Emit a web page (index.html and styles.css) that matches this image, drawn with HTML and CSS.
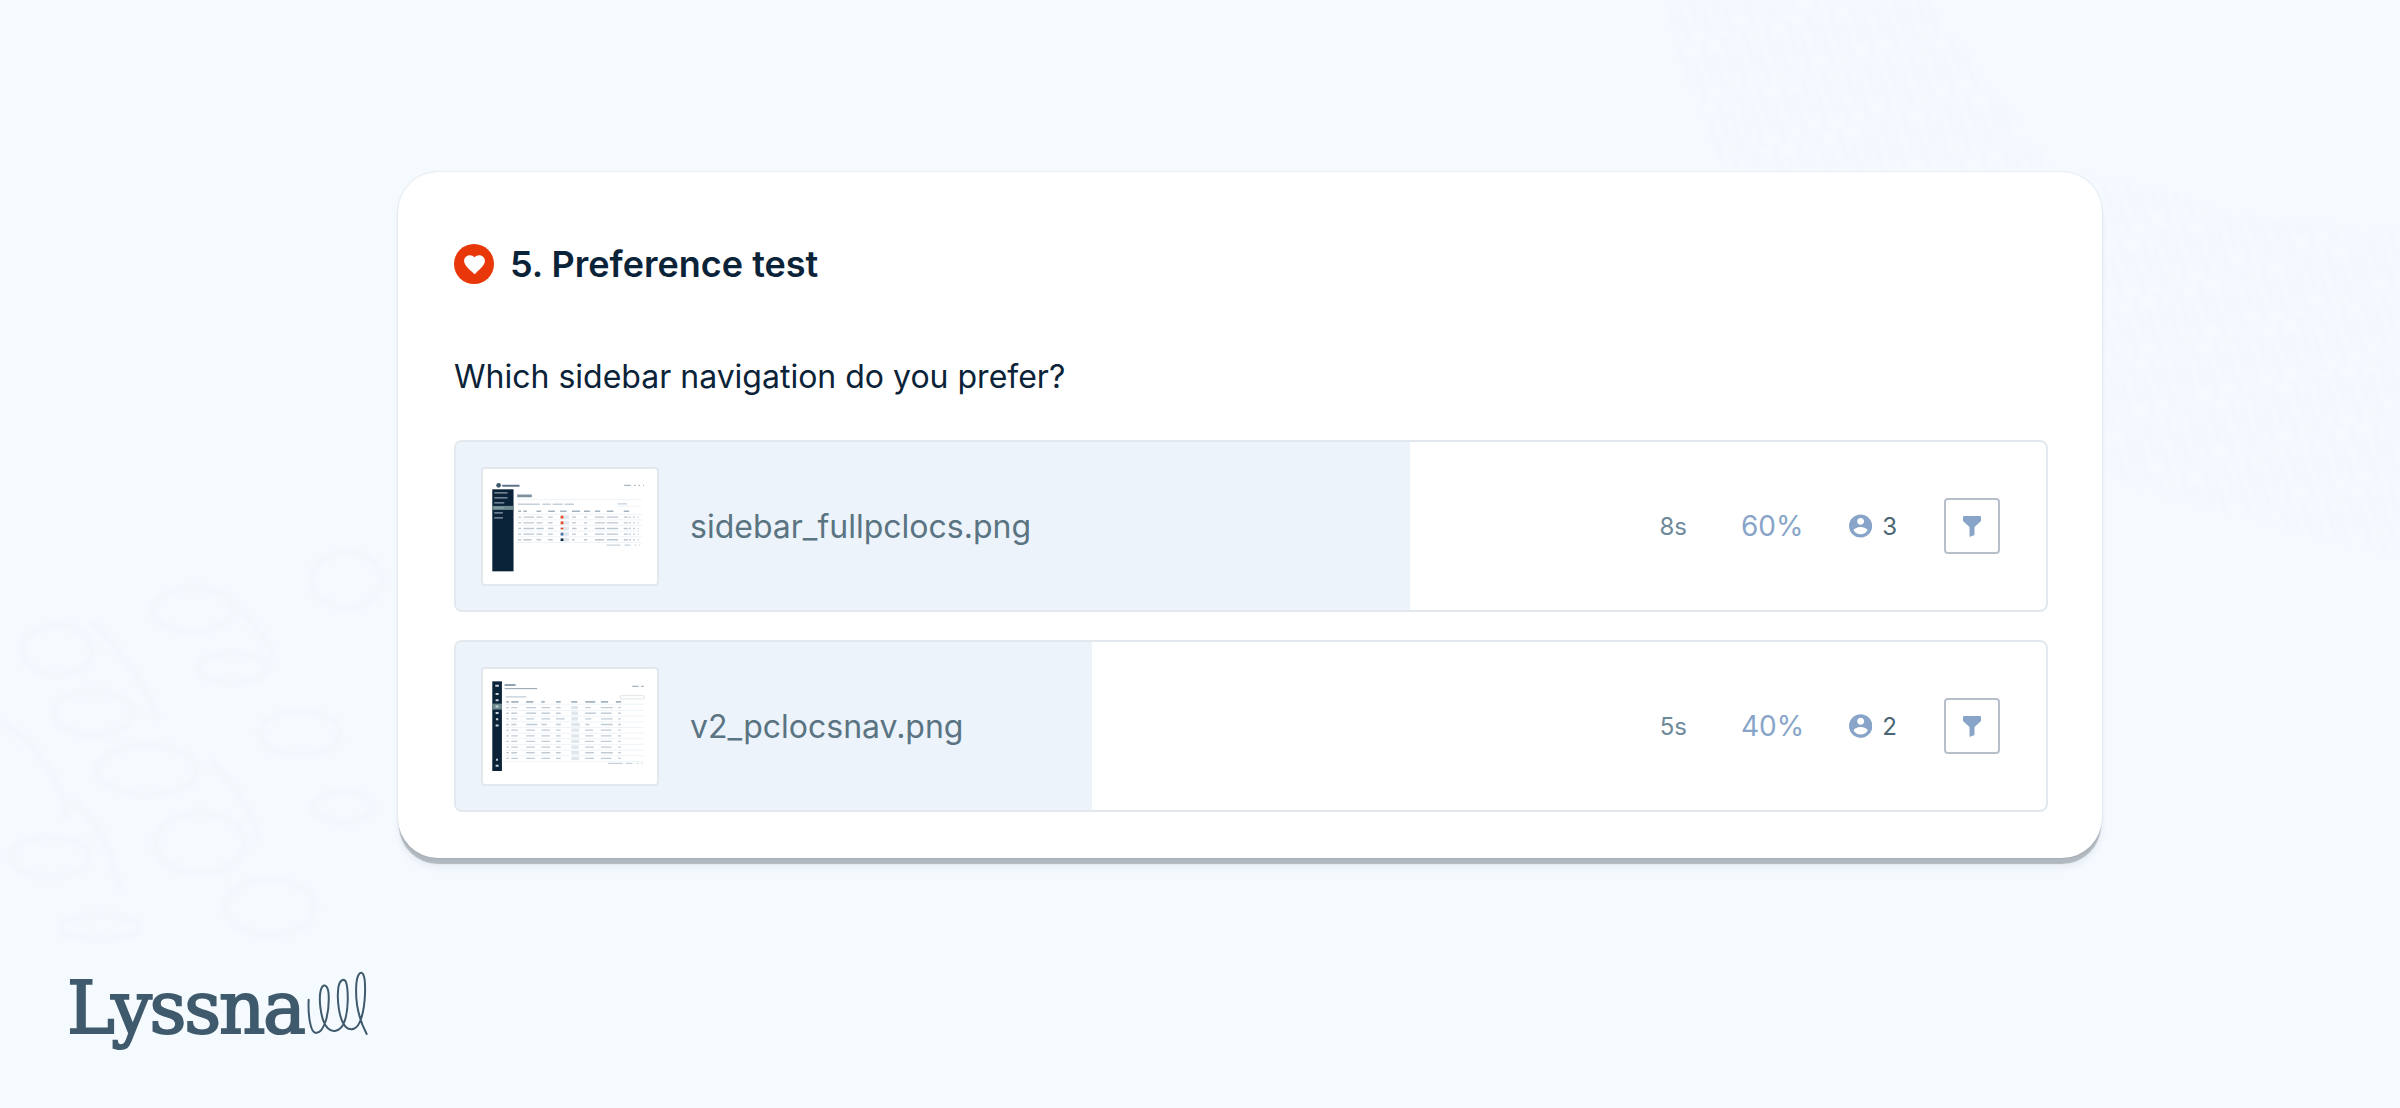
FILE: index.html
```html
<html lang="en">

<head>
    <title>Preference test</title>
    <link rel="stylesheet" href="styles.css">
</head>

<body>
    <svg class="bg-art" viewBox="0 0 2400 1108" width="2400" height="1108">
        <defs>
            <pattern id="hatch" width="22" height="60" patternUnits="userSpaceOnUse" patternTransform="rotate(-15)">
                <path d="M5 0v44M15 14v46" stroke="#f3f8fe" stroke-width="6" fill="none"/>
            </pattern>
            <filter id="soft"><feGaussianBlur stdDeviation="2"/></filter>
        </defs>
        <g filter="url(#soft)">
            <path fill="url(#hatch)" d="M1660 0H1930L2055 170H1720z"/>
            <path fill="url(#hatch)" d="M2090 170L2270 220L2400 230V560L2110 480z"/>
        </g>
        <g fill="none" stroke="#f3f8fd" stroke-width="7" filter="url(#soft)">
            <ellipse cx="57" cy="650" rx="35" ry="25"/>
            <ellipse cx="193" cy="610" rx="40" ry="22"/>
            <ellipse cx="233" cy="668" rx="35" ry="15"/>
            <ellipse cx="93" cy="713" rx="40" ry="22"/>
            <ellipse cx="147" cy="770" rx="50" ry="25"/>
            <ellipse cx="300" cy="733" rx="40" ry="22"/>
            <ellipse cx="347" cy="580" rx="35" ry="28"/>
            <ellipse cx="200" cy="843" rx="45" ry="30"/>
            <ellipse cx="50" cy="857" rx="40" ry="20"/>
            <ellipse cx="270" cy="907" rx="45" ry="28"/>
            <ellipse cx="100" cy="927" rx="40" ry="12"/>
            <ellipse cx="343" cy="807" rx="30" ry="15"/>
            <path d="M220 590C250 620 270 640 275 660M90 620C120 650 150 690 158 720M210 760C240 790 255 820 260 840M0 720C30 740 60 770 68 820M70 800C100 820 115 860 120 890"/>
        </g>
    </svg>

    <div class="card">
        <div class="card-title">
            <span class="title-icon">
                <svg viewBox="0 0 24 24" width="25" height="25"><path fill="#fff" d="M12 21.35l-1.45-1.32C5.4 15.36 2 12.28 2 8.500 2 5.420 4.420 3 7.500 3c1.740 0 3.410.81 4.500 2.090C13.090 3.810 14.760 3 16.500 3 19.580 3 22 5.420 22 8.500c0 3.780-3.400 6.860-8.550 11.540L12 21.350z"/></svg>
            </span>
            <h2>5. Preference test</h2>
        </div>
        <p class="question">Which sidebar navigation do you prefer?</p>

        <div class="answer">
            <div class="answer-fill" style="width: 60%;"></div>
            <div class="thumb">
                <svg viewBox="122 78 536 358" width="178" height="119">
                    <circle cx="175" cy="133" r="7" fill="#3f5a6c"/>
                    <path d="M186 134h52" stroke="#5d7486" stroke-width="6" fill="none"/>
                    <path d="M553 133h20M583 133h5M596 133h5M610 133h3" stroke="#a9b6c2" stroke-width="4" fill="none"/>
                    <rect x="156" y="145" width="64" height="247" fill="#0b2338"/>
                    <rect x="156" y="195" width="64" height="12" fill="#6f8a8f"/>
                    <path d="M162 156h40M162 171h40M162 186h30M162 201h30M162 216h26M162 231h26" stroke="#8ea0ad" stroke-width="4" fill="none"/>
                    <path d="M231 165h44" stroke="#7d91a1" stroke-width="8" fill="none"/>
                    <path d="M231 176h375M534 196h72M231 220h375M231 237h375M231 254h375M231 271h375M231 288h375M231 305h375" stroke="#e6eef6" stroke-width="2" fill="none"/>
                    <path d="M233 190h66M307 190h25M338 190h30M374 190h28M534 189h28" stroke="#c4d0da" stroke-width="4" fill="none"/>
                    <path d="M234 211h9M250 211h10M289 211h14M324 211h20M360 211h20M396 211h24M432 211h18M465 211h16M501 211h20M552 211h16" stroke="#a3b3c0" stroke-width="4" fill="none"/>
                    <path d="M234 229h9M250 229h32M289 229h18M324 229h14M396 229h12M432 229h10M465 229h28M501 229h34M552 229h12M567 229h6M580 229h5M594 229h3" stroke="#bcc8d2" stroke-width="4" fill="none"/>
                    <path d="M234 246h9M250 246h32M289 246h18M324 246h14M396 246h12M432 246h10M465 246h30M501 246h34M552 246h12M567 246h6M580 246h5M594 246h3" stroke="#bcc8d2" stroke-width="4" fill="none"/>
                    <path d="M234 263h9M250 263h32M289 263h22M324 263h16M396 263h14M432 263h10M465 263h30M501 263h34M552 263h12M567 263h6M580 263h5M594 263h3" stroke="#bcc8d2" stroke-width="4" fill="none"/>
                    <path d="M234 280h9M250 280h32M289 280h18M324 280h14M396 280h12M432 280h10M465 280h28M501 280h34M552 280h12M567 280h6M580 280h5M594 280h3" stroke="#bcc8d2" stroke-width="4" fill="none"/>
                    <path d="M234 297h9M250 297h24M289 297h14M324 297h14M396 297h8M432 297h10M465 297h28M501 297h34M552 297h12M567 297h6M580 297h5M594 297h3" stroke="#bcc8d2" stroke-width="4" fill="none"/>
                    <path d="M361 229h26M361 246h26M361 263h26M361 280h26M361 297h26" stroke="#dfe6ec" stroke-width="10" fill="none"/>
                    <path d="M362 229h8M362 246h8" stroke="#e8481c" stroke-width="8" fill="none"/>
                    <path d="M362 263h8" stroke="#e8481c" stroke-width="4" fill="none"/>
                    <path d="M362 280h8" stroke="#4a72a8" stroke-width="8" fill="none"/>
                    <path d="M362 297h8" stroke="#0b2338" stroke-width="8" fill="none"/>
                    <path d="M500 313h42M554 313h18M585 313h4M597 313h3" stroke="#bcc8d2" stroke-width="3" fill="none"/>
                </svg>
            </div>
            <span class="file-name">sidebar_fullpclocs.png</span>
            <span class="time">8s</span>
            <span class="percent">60%</span>
            <span class="count">
                <svg viewBox="2 2 20 20" width="24" height="24"><path fill="#88a5c9" d="M12 2C6.480 2 2 6.480 2 12s4.480 10 10 10 10-4.480 10-10S17.520 2 12 2zm0 3c1.660 0 3 1.340 3 3s-1.340 3-3 3-3-1.340-3-3 1.340-3 3-3zm0 14.200c-2.500 0-4.710-1.280-6-3.220.03-1.990 4-3.080 6-3.080 1.990 0 5.970 1.090 6 3.080-1.290 1.940-3.500 3.220-6 3.220z"/></svg>
                3
            </span>
            <button class="filter-btn">
                <svg viewBox="0 0 18 21" width="18" height="21"><path fill="#88a5c9" d="M1 0H17a1 1 0 0 1 1 1V5L11.500 11V19L6.500 21V11L0 5V1a1 1 0 0 1 1-1z"/></svg>
            </button>
        </div>

        <div class="answer">
            <div class="answer-fill" style="width: 40%;"></div>
            <div class="thumb">
                <svg viewBox="122 50 536 358" width="178" height="119">
                    <rect x="156" y="93" width="29" height="270" fill="#0b2338"/>
                    <rect x="156" y="160" width="29" height="18" fill="#6f8a8f"/>
                    <path d="M165 106h11M166 131h9M166 150h9M166 169h9M166 188h9M167 207h7M166 226h9M167 329h6M166 347h9" stroke="#c8d2da" stroke-width="6" fill="none"/>
                    <path d="M193 104h33" stroke="#8fa2b1" stroke-width="6" fill="none"/>
                    <path d="M193 115h98" stroke="#8fa2b1" stroke-width="3" fill="none"/>
                    <path d="M577 108h20M604 108h8" stroke="#a9b6c2" stroke-width="4" fill="none"/>
                    <path d="M196 140h62" stroke="#c0ccd6" stroke-width="4" fill="none"/>
                    <rect x="541" y="136" width="72" height="10" rx="3" fill="#fff" stroke="#d2dae2" stroke-width="2"/>
                    <path d="M196 162h417M196 181h417M196 198h417M196 215h417M196 232h417M196 249h417M196 266h417M196 283h417M196 300h417M196 317h417M196 334h417" stroke="#e6eef6" stroke-width="2" fill="none"/>
                    <path d="M198 155h8M213 155h22M258 155h22M304 155h10M348 155h14M394 155h18M436 155h30M483 155h22M528 155h16" stroke="#a3b3c0" stroke-width="5" fill="none"/>
                    <path d="M198 172h8M213 172h18M258 172h30M304 172h26M348 172h14M436 172h16M483 172h36M535 172h8M198 189h8M213 189h18M258 189h30M304 189h26M348 189h14M436 189h32M483 189h32M535 189h8M198 206h8M213 206h18M258 206h24M304 206h26M348 206h26M436 206h18M483 206h36M535 206h8M198 223h8M213 223h16M258 223h34M304 223h16M348 223h14M436 223h12M483 223h36M535 223h8M198 240h8M213 240h20M258 240h26M304 240h26M348 240h14M436 240h24M483 240h32M535 240h8M198 257h8M213 257h20M258 257h26M304 257h26M348 257h14M436 257h24M483 257h32M535 257h8M198 274h8M213 274h18M258 274h26M304 274h26M348 274h14M436 274h26M483 274h32M535 274h8M198 291h8M213 291h20M258 291h26M304 291h26M348 291h14M436 291h26M483 291h32M535 291h8M198 308h8M213 308h18M258 308h26M304 308h26M348 308h14M436 308h26M483 308h36M535 308h8M198 325h8M213 325h20M258 325h26M304 325h26M348 325h14M436 325h26M483 325h32M535 325h8" stroke="#c0ccd6" stroke-width="4" fill="none"/>
                    <path d="M394 172h20M394 189h20M394 206h20M394 223h26M394 240h24M394 257h24M394 274h24M394 291h22M394 308h24M394 325h24" stroke="#dfe6ec" stroke-width="10" fill="none"/>
                    <path d="M505 340h44M558 340h20M592 340h4M605 340h3" stroke="#bcc8d2" stroke-width="3" fill="none"/>
                </svg>
            </div>
            <span class="file-name">v2_pclocsnav.png</span>
            <span class="time">5s</span>
            <span class="percent">40%</span>
            <span class="count">
                <svg viewBox="2 2 20 20" width="24" height="24"><path fill="#88a5c9" d="M12 2C6.480 2 2 6.480 2 12s4.480 10 10 10 10-4.480 10-10S17.520 2 12 2zm0 3c1.660 0 3 1.340 3 3s-1.340 3-3 3-3-1.340-3-3 1.340-3 3-3zm0 14.200c-2.500 0-4.710-1.280-6-3.220.03-1.990 4-3.080 6-3.080 1.990 0 5.970 1.090 6 3.080-1.290 1.940-3.500 3.220-6 3.220z"/></svg>
                2
            </span>
            <button class="filter-btn">
                <svg viewBox="0 0 18 21" width="18" height="21"><path fill="#88a5c9" d="M1 0H17a1 1 0 0 1 1 1V5L11.500 11V19L6.500 21V11L0 5V1a1 1 0 0 1 1-1z"/></svg>
            </button>
        </div>
    </div>

    <div class="logo">
        <span class="logo-text">Lyssna</span>
        <svg class="logo-loops" viewBox="770 60 190 190" width="63" height="63"><path fill="none" stroke="#3f5a6c" stroke-width="6" stroke-linecap="round" d="M778 150C776 190 782 250 800 250C825 250 842 190 838 130C836 108 825 100 818 112C806 135 812 210 835 235C850 250 870 245 882 225C900 190 898 115 890 95C884 85 872 90 868 110C862 150 870 210 890 232C905 245 925 240 935 210C950 170 952 90 942 72C935 62 925 72 922 100C918 150 925 200 953 253"/></svg>
    </div>
</body>
</html>
```

FILE: styles.css
```css
body {
    margin: 0;
    width: 2400px;
    height: 1108px;
    overflow: hidden;
    background-color: #f5faff;
    font-family: Inter, "Liberation Sans", sans-serif;
    color: #0b2338;
}

.bg-art {
    position: absolute;
    top: 0;
    left: 0;
}

.card {
    position: relative;
    box-sizing: border-box;
    width: 1704px;
    height: 686px;
    margin: 172px 0 0 398px;
    padding: 72px 54px 0 56px;
    background: #fff;
    border-radius: 40px;
    box-shadow: 0 7px 1px -1px rgba(50, 60, 70, 0.3), 0 10px 6px rgba(30, 50, 70, 0.06), 0 0 2px rgba(30, 50, 70, 0.2);
}

.card-title {
    display: flex;
    align-items: center;
    gap: 16px;
    height: 40px;
}

.title-icon {
    width: 40px;
    height: 40px;
    border-radius: 50%;
    background: #e8380a;
    display: flex;
    align-items: center;
    justify-content: center;
}

.card-title h2 {
    margin: 0;
    font-size: 36px;
    font-weight: 600;
}

.question {
    margin: 0;
    padding: 73px 0 43px;
    font-size: 32px;
    line-height: 40px;
}

.answer {
    position: relative;
    box-sizing: border-box;
    height: 172px;
    margin-bottom: 28px;
    padding: 0 46px 0 25px;
    display: flex;
    align-items: center;
    border: 2px solid #e3e8ef;
    border-radius: 8px;
    color: #5a7482;
}

.answer-fill {
    position: absolute;
    top: 0;
    bottom: 0;
    left: 0;
    background: #ecf3fb;
    border-radius: 6px 0 0 6px;
}

.thumb {
    position: relative;
    box-sizing: border-box;
    width: 178px;
    height: 119px;
    background: #fff;
    border: 2px solid #e3e8ef;
    border-radius: 4px;
    overflow: hidden;
}

.thumb svg {
    display: block;
    margin: -2px;
}

.file-name {
    position: relative;
    margin-left: 31px;
    font-size: 32px;
    flex: 1;
}

.time {
    font-size: 24px;
    color: #6f8a99;
}

.percent {
    margin-left: 54px;
    width: 62px;
    font-size: 28px;
    color: #88a5c9;
}

.count {
    margin-left: 46px;
    width: 48px;
    display: flex;
    align-items: center;
    gap: 10px;
    font-size: 24px;
    color: #4a6572;
}

.filter-btn {
    margin-left: 47px;
    width: 56px;
    height: 56px;
    padding: 0;
    display: flex;
    align-items: center;
    justify-content: center;
    background: #fff;
    border: 2px solid #b7c0ca;
    border-radius: 4px;
}

.logo {
    position: relative;
    margin: 112px 0 0 67px;
    display: flex;
    align-items: baseline;
    gap: 2px;
    color: #3f5a6c;
}

.logo-text {
    font-family: "DejaVu Serif", serif;
    font-size: 72px;
    line-height: 63px;
    letter-spacing: -2.300px;
    -webkit-text-stroke: 2px #3f5a6c;
}

.logo-loops {
    overflow: visible;
}
```
